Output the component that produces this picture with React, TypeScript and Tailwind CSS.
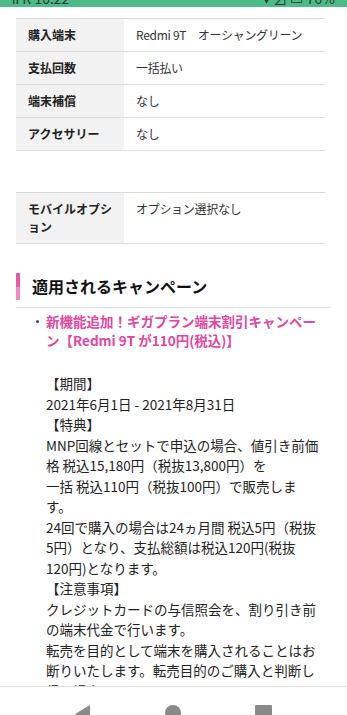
const specRows = [
  { label: "購入端末", value: "Redmi 9T\u3000オーシャングリーン" },
  { label: "支払回数", value: "一括払い" },
  { label: "端末補償", value: "なし" },
  { label: "アクセサリー", value: "なし" },
]

const bodyLines = [
  "【期間】",
  "2021年6月1日 - 2021年8月31日",
  "【特典】",
  "MNP回線とセットで申込の場合、値引き前価",
  "格 税込15,180円（税抜13,800円）を",
  "一括 税込110円（税抜100円）で販売しま",
  "す。",
  "24回で購入の場合は24ヵ月間 税込5円（税抜",
  "5円）となり、支払総額は税込120円(税抜",
  "120円)となります。",
  "【注意事項】",
  "クレジットカードの与信照会を、割り引き前",
  "の端末代金で行います。",
  "転売を目的として端末を購入されることはお",
  "断りいたします。転売目的のご購入と判断し",
  "得る場合",
]

const SpecTable = ({ rows }: { rows: { label: string; value: string }[] }) => (
  <table className="w-[309px] border-collapse text-[12px] leading-[18px]">
    <tbody className="border-t border-[#d9d9d9]">
      {rows.map((row) => (
        <tr key={row.label} className="border-b border-[#dedede]">
          <th className="w-[108px] bg-[#f2f2f2] pl-3 pr-[10px] py-[7px] text-left align-top font-bold text-[#222]">
            {row.label}
          </th>
          <td className="pl-3 py-[7px] align-top text-[#333] tracking-[-0.3px]">{row.value}</td>
        </tr>
      ))}
    </tbody>
  </table>
)

export default function App() {
  return (
    <div className="min-h-[715px] bg-white font-['Noto_Sans_CJK_JP','Noto_Sans',sans-serif] text-[#222]">
      {/* status bar, scrolled mostly out of view */}
      <div className="flex h-[7px] items-end justify-between overflow-hidden bg-[#4dba87] px-3 pb-[2px] text-[14px] leading-[14px] text-[#1f3d30]">
        <span>ıı R 10:22</span>
        <span>▾ ⊿ ▭ 76%</span>
      </div>

      <div className="pl-4 pt-[11px]">
        <SpecTable rows={specRows} />

        <div className="mt-[41px]">
          <SpecTable rows={[{ label: "モバイルオプション", value: "オプション選択なし" }]} />
        </div>

        <div className="mt-[29px] flex items-center">
          <div className="flex h-[27px] w-1 flex-col">
            <div className="h-[14px] bg-[#e85aa5]" />
            <div className="flex-1 bg-[#f08cc4]" />
          </div>
          <h2 className="pl-3 text-[16px] font-bold leading-[27px] text-[#111]">
            適用されるキャンペーン
          </h2>
        </div>
        <div className="mt-[7px] w-[314px] border-t border-[#dcdcdc]" />

        <ul className="mt-[4px] pl-5">
          <li className="flex">
            <span className="flex h-[19px] w-[10px] items-center">
              <span className="h-[3px] w-[3px] rounded-full bg-[#444]" />
            </span>
            <span className="w-[276px] text-[13.5px] font-bold leading-[19px] text-[#e2479e]">
              新機能追加！ギガプラン端末割引キャンペーン【Redmi 9T が110円(税込)】
            </span>
          </li>
        </ul>

        <div className="mt-[23px] pl-[30px] text-[13.5px] leading-[20.5px] whitespace-nowrap">
          {bodyLines.map((line, i) => (
            <div key={i}>{line}</div>
          ))}
        </div>
      </div>

      <div className="fixed bottom-0 left-0 h-[29px] w-full overflow-hidden border-t border-[#dedede] bg-white">
        <div className="flex gap-[60px] pl-[68px] pt-[18px]">
          <div className="flex w-[30px] justify-center">
            <svg width="16" height="18" viewBox="0 0 16 18">
              <path d="M15 0 L0 9 L15 18 Z" fill="#8a8a8a" />
            </svg>
          </div>
          <div className="flex w-[30px] justify-center">
            <div className="h-[16px] w-[16px] rounded-full bg-[#8a8a8a]" />
          </div>
          <div className="flex w-[30px] justify-center">
            <div className="h-[17px] w-[17px] rounded-[1px] bg-[#8a8a8a]" />
          </div>
        </div>
      </div>
    </div>
  )
}
